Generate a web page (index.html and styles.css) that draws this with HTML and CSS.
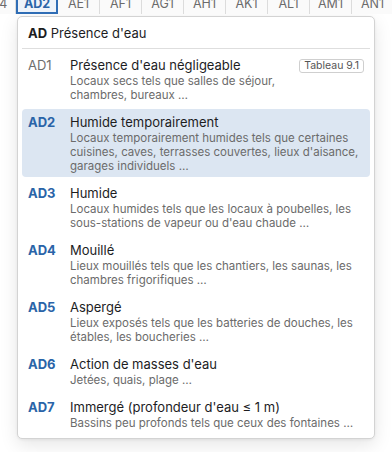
FILE: index.html
```html
<!DOCTYPE html>
<html lang="fr">
<head>
<meta charset="utf-8">
<link rel="stylesheet" href="styles.css">
</head>
<body>
<div class="tabs">
  <div class="tab">AD4</div>
  <div class="tab active">AD2</div>
  <div class="tab">AE1</div>
  <div class="tab">AF1</div>
  <div class="tab">AG1</div>
  <div class="tab">AH1</div>
  <div class="tab">AK1</div>
  <div class="tab">AL1</div>
  <div class="tab">AM1</div>
  <div class="tab">AN1</div>
</div>
<div class="popover">
  <div class="head"><b>AD</b> Présence d'eau</div>
  <div class="list">
    <div class="row">
      <div class="code muted">AD1</div>
      <div class="body">
        <div class="title-line"><span class="title">Présence d'eau négligeable</span><span class="badge">Tableau 9.1</span></div>
        <div class="desc">Locaux secs tels que salles de séjour,<br>chambres, bureaux …</div>
      </div>
    </div>
    <div class="row selected">
      <div class="code">AD2</div>
      <div class="body">
        <div class="title">Humide temporairement</div>
        <div class="desc">Locaux temporairement humides tels que certaines<br>cuisines, caves, terrasses couvertes, lieux d'aisance,<br>garages individuels …</div>
      </div>
    </div>
    <div class="row">
      <div class="code">AD3</div>
      <div class="body">
        <div class="title">Humide</div>
        <div class="desc">Locaux humides tels que les locaux à poubelles, les<br>sous-stations de vapeur ou d'eau chaude …</div>
      </div>
    </div>
    <div class="row">
      <div class="code">AD4</div>
      <div class="body">
        <div class="title">Mouillé</div>
        <div class="desc">Lieux mouillés tels que les chantiers, les saunas, les<br>chambres frigorifiques …</div>
      </div>
    </div>
    <div class="row">
      <div class="code">AD5</div>
      <div class="body">
        <div class="title">Aspergé</div>
        <div class="desc">Lieux exposés tels que les batteries de douches, les<br>étables, les boucheries …</div>
      </div>
    </div>
    <div class="row">
      <div class="code">AD6</div>
      <div class="body">
        <div class="title">Action de masses d'eau</div>
        <div class="desc">Jetées, quais, plage …</div>
      </div>
    </div>
    <div class="row">
      <div class="code">AD7</div>
      <div class="body">
        <div class="title">Immergé (profondeur d'eau ≤ 1 m)</div>
        <div class="desc">Bassins peu profonds tels que ceux des fontaines …</div>
      </div>
    </div>
  </div>
</div>
</body>
</html>
```
FILE: styles.css
```css
* { box-sizing: border-box; }
html, body { margin: 0; padding: 0; background: #fff; }
body {
  font-family: Inter, "Noto Sans", "Liberation Sans", sans-serif;
  color: #1d1d1f;
  overflow: hidden;
  width: 392px;
  height: 452px;
}
.tabs {
  display: flex;
  margin-left: -26px;
  margin-top: -6px;
  height: 20px;
  border-bottom: 1px solid #d6d6d6;
  background: #f7f7f7;
}
.tab {
  flex: 0 0 42px;
  height: 20px;
  line-height: 19px;
  text-align: center;
  font-size: 12.5px;
  color: #6b6b6b;
  border-right: 1px solid #dcdcdc;
  background: #fafafa;
}
.tab.active {
  background: #eef3fa;
  border: 2px solid #2f6db5;
  color: #2a64a8;
  font-weight: 700;
  line-height: 16px;
}
.popover {
  margin: 2px 0 0 17px;
  width: 358px;
  border: 1px solid #d3d3d3;
  border-radius: 5px;
  background: #fff;
  box-shadow: 0 6px 18px rgba(0,0,0,0.10), 0 1px 3px rgba(0,0,0,0.06);
  padding: 0 4px 4px;
}
.head {
  font-size: 13px;
  line-height: 17px;
  padding: 8px 6px 6px;
  border-bottom: 1px solid #dedede;
  color: #1d1d1f;
}
.head b { font-weight: 700; }
.list { display: flex; flex-direction: column; gap: 3px; padding-top: 3px; }
.row {
  display: flex;
  padding: 5px 6px 4px;
  border-radius: 4px;
}
.row.selected { background: #dce6f2; }
.code {
  flex: 0 0 42px;
  font-size: 13px;
  line-height: 17px;
  font-weight: 700;
  color: #2a64a8;
}
.code.muted { font-weight: 400; color: #6e6e6e; }
.body { flex: 1; min-width: 0; }
.title-line { display: flex; justify-content: space-between; align-items: center; }
.title { font-size: 13px; line-height: 17px; color: #1d1d1f; }
.badge {
  font-size: 10.5px;
  line-height: 12px;
  padding: 0 4px;
  border: 1px solid #cfcfcf;
  border-radius: 3px;
  color: #555;
}
.desc { font-size: 11.5px; line-height: 14px; color: #6b6b6b; }
```
